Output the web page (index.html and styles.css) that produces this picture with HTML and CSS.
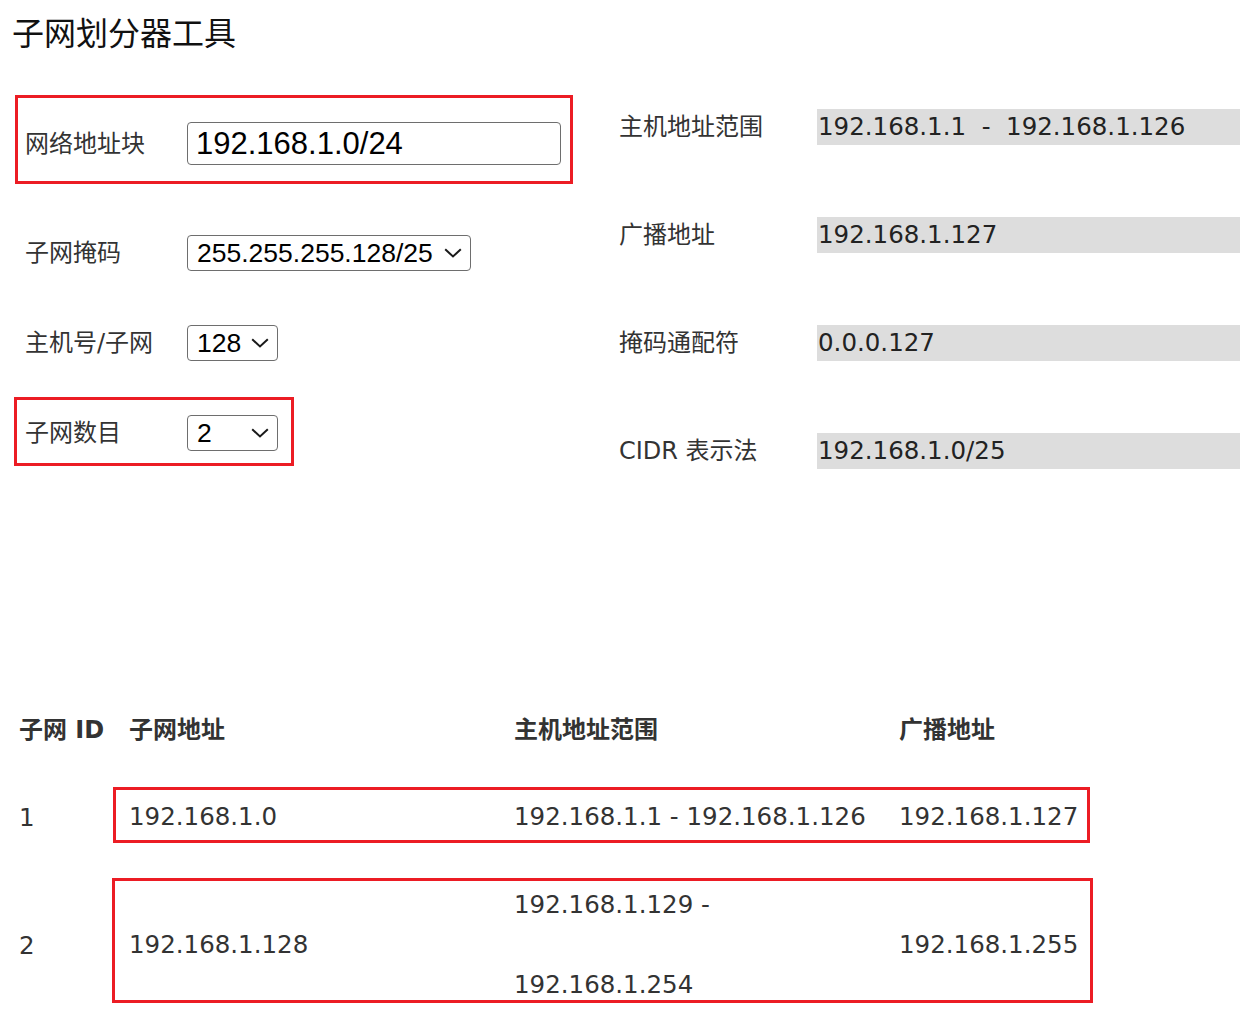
FILE: index.html
```html
<!DOCTYPE html>
<html lang="zh-CN">
<head>
<meta charset="utf-8">
<title>子网划分器工具</title>
<link rel="stylesheet" href="styles.css">
</head>
<body>
<h1 class="title">子网划分器工具</h1>
<div class="main">
  <div class="form">
    <div class="field field-hl field-first">
      <label class="field-label" for="net">网络地址块</label>
      <input id="net" class="text-input" type="text" value="192.168.1.0/24">
    </div>
    <div class="field field-plain">
      <label class="field-label" for="mask">子网掩码</label>
      <span class="select-wrap select-mask">
        <select id="mask" class="select"><option>255.255.255.128/25</option></select>
        <svg class="chev" width="18" height="10" viewBox="0 0 18 10"><path d="M1.2 1.2l7.8 7.3 7.8-7.3" fill="none" stroke="#1a1a1a" stroke-width="2"/></svg>
      </span>
    </div>
    <div class="field field-plain">
      <label class="field-label" for="hosts">主机号/子网</label>
      <span class="select-wrap select-small">
        <select id="hosts" class="select"><option>128</option></select>
        <svg class="chev" width="18" height="10" viewBox="0 0 18 10"><path d="M1.2 1.2l7.8 7.3 7.8-7.3" fill="none" stroke="#1a1a1a" stroke-width="2"/></svg>
      </span>
    </div>
    <div class="field field-hl field-last">
      <label class="field-label" for="count">子网数目</label>
      <span class="select-wrap select-small">
        <select id="count" class="select"><option>2</option></select>
        <svg class="chev" width="18" height="10" viewBox="0 0 18 10"><path d="M1.2 1.2l7.8 7.3 7.8-7.3" fill="none" stroke="#1a1a1a" stroke-width="2"/></svg>
      </span>
    </div>
  </div>
  <div class="results">
    <div class="result"><span class="result-label">主机地址范围</span><span class="result-value">192.168.1.1&nbsp; - &nbsp;192.168.1.126</span></div>
    <div class="result"><span class="result-label">广播地址</span><span class="result-value">192.168.1.127</span></div>
    <div class="result"><span class="result-label">掩码通配符</span><span class="result-value">0.0.0.127</span></div>
    <div class="result"><span class="result-label">CIDR 表示法</span><span class="result-value">192.168.1.0/25</span></div>
  </div>
</div>
<div class="table">
  <div class="thead">
    <span class="th th-id">子网 ID</span>
    <span class="th th-addr">子网地址</span>
    <span class="th th-range">主机地址范围</span>
    <span class="th th-bcast">广播地址</span>
  </div>
  <div class="row row-one">
    <span class="cell-id">1</span>
    <div class="hl">
      <span class="cell cell-addr">192.168.1.0</span>
      <span class="cell cell-range">192.168.1.1 - 192.168.1.126</span>
      <span class="cell cell-bcast">192.168.1.127</span>
    </div>
  </div>
  <div class="row row-two">
    <span class="cell-id">2</span>
    <div class="hl">
      <span class="cell cell-addr">192.168.1.128</span>
      <span class="cell cell-range cell-wrap"><span class="line">192.168.1.129 -</span><span class="line">192.168.1.254</span></span>
      <span class="cell cell-bcast">192.168.1.255</span>
    </div>
  </div>
</div>
</body>
</html>
```

FILE: styles.css
```css
html, body {
  margin: 0;
  padding: 0;
  background: #fff;
}
body {
  font-family: "DejaVu Sans", "Noto Sans CJK SC", sans-serif;
  color: #333;
}
.title {
  margin: 14px 0 0 12px;
  font-size: 32px;
  line-height: 40px;
  font-weight: normal;
  color: #111;
}
.main {
  display: flex;
  height: 415px;
}
.form {
  width: 605px;
  flex: none;
  padding: 41px 0 0 14px;
  display: flex;
  flex-direction: column;
}
.field {
  display: flex;
  align-items: center;
  box-sizing: border-box;
}
.field-label {
  width: 162px;
  flex: none;
  font-size: 24px;
  line-height: 30px;
  color: #333;
}
.field-hl {
  border: 3px solid #ec1c24;
}
.field-first {
  margin-left: 1px;
  width: 558px;
  height: 89px;
  padding: 8px 0 0 7px;
}
.field-plain {
  height: 90px;
  padding-left: 11px;
}
.field-first + .field-plain {
  margin-top: 24px;
}
.field-last {
  margin-top: 9px;
  width: 280px;
  height: 69px;
  padding: 3px 0 0 8px;
}
.text-input {
  box-sizing: border-box;
  width: 374px;
  height: 43px;
  margin: 0;
  padding: 0 8px;
  border: 1px solid #6e6e6e;
  border-radius: 4px;
  font-family: "Liberation Sans", sans-serif;
  font-size: 31px;
  color: #000;
  outline: none;
}
.select-wrap {
  position: relative;
  display: inline-block;
}
.select {
  appearance: none;
  -webkit-appearance: none;
  box-sizing: border-box;
  height: 36px;
  margin: 0;
  padding: 0 30px 0 9px;
  border: 1px solid #6e6e6e;
  border-radius: 4px;
  background: #fff;
  font-family: "Liberation Sans", sans-serif;
  font-size: 26.5px;
  color: #000;
  outline: none;
}
.select-mask .select { width: 284px; }
.select-small .select { width: 91px; }
.chev {
  position: absolute;
  right: 9px;
  top: 13px;
  pointer-events: none;
}
.results {
  padding-top: 55px;
  display: flex;
  flex-direction: column;
  gap: 72px;
}
.result {
  display: flex;
  align-items: center;
  height: 36px;
}
.result-label {
  width: 198px;
  font-size: 24px;
  line-height: 30px;
  color: #333;
}
.result-value {
  box-sizing: border-box;
  width: 423px;
  height: 36px;
  padding-left: 1px;
  background: #ddd;
  font-size: 24.5px;
  line-height: 36px;
  color: #222;
  white-space: nowrap;
}
.table {
  margin-top: 238px;
  font-size: 24.5px;
  color: #333;
}
.thead {
  display: flex;
  align-items: center;
  height: 40px;
  padding-left: 19px;
  font-weight: bold;
  font-size: 24px;
}
.th-id { width: 110px; }
.th-addr { width: 385px; }
.th-range { width: 385px; }
.row {
  display: flex;
  padding-left: 19px;
}
.cell-id {
  width: 94px;
  display: flex;
  align-items: center;
  box-sizing: border-box;
}
.hl {
  box-sizing: border-box;
  display: flex;
  align-items: center;
  border: 3px solid #ec1c24;
  padding-left: 13px;
}
.cell { line-height: 30px; }
.cell-addr { width: 385px; }
.cell-range { width: 385px; }
.row-one {
  margin-top: 40px;
}
.row-one .hl {
  width: 977px;
  height: 56px;
  padding-top: 4px;
}
.row-one .cell-id { padding-top: 4px; }
.row-two {
  margin-top: 35px;
}
.row-two .hl {
  margin-left: -1px;
  width: 981px;
  height: 125px;
  padding-top: 9px;
  padding-left: 14px;
}
.row-two .cell-id { padding-top: 9px; }
.cell-wrap {
  display: flex;
  flex-direction: column;
  gap: 50px;
}
.line { display: block; line-height: 30px; }
```
